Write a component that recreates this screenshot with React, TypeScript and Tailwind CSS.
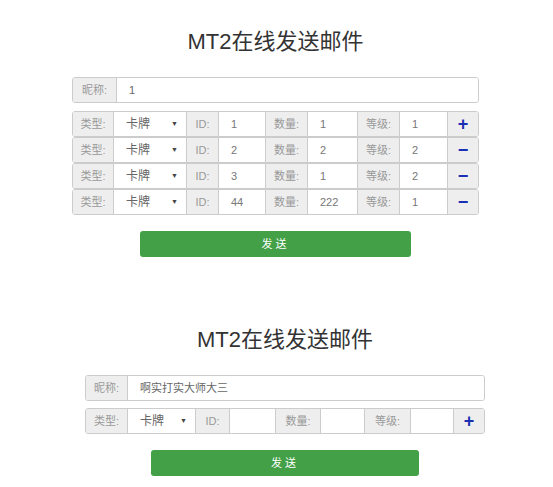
type Item = { id: string; num: string; level: string; add: boolean };

type Widths = number[];

const topRows: Item[] = [
  { id: '1', num: '1', level: '1', add: true },
  { id: '2', num: '2', level: '2', add: false },
  { id: '3', num: '1', level: '2', add: false },
  { id: '44', num: '222', level: '1', add: false },
];

const bottomRows: Item[] = [{ id: '', num: '', level: '', add: true }];

function Label({ text, w, first }: { text: string; w: number; first?: boolean }) {
  return (
    <div
      style={{ width: w }}
      className={`flex h-full shrink-0 items-center justify-center bg-[#eeeeee] text-[#999] ${first ? '' : 'border-l border-[#cccccc]'}`}
    >
      {text}
    </div>
  );
}

function Field({ value, w }: { value: string; w: number }) {
  return (
    <div style={{ width: w }} className="flex h-full shrink-0 items-center border-l border-[#cccccc] bg-white pl-3 text-[#777]">
      {value}
    </div>
  );
}

function Row({ item, w }: { item: Item; w: Widths }) {
  return (
    <div className="flex h-[26px] overflow-hidden rounded-[3px] border border-[#cccccc] text-[11px]">
      <Label text="类型:" w={w[0] - 1} first />
      <div style={{ width: w[1] }} className="flex h-full shrink-0 items-center justify-between border-l border-[#cccccc] bg-white pl-3 pr-2 text-[#666]">
        <span className="text-[12px]">卡牌</span>
        <span className="text-[7px] text-[#444]">▼</span>
      </div>
      <Label text="ID:" w={w[2]} />
      <Field value={item.id} w={w[3]} />
      <Label text="数量:" w={w[4]} />
      <Field value={item.num} w={w[5]} />
      <Label text="等级:" w={w[6]} />
      <Field value={item.level} w={w[7]} />
      <div className="flex h-full flex-1 items-center justify-center border-l border-[#cccccc] bg-[#eeeeee] text-[18px] font-bold text-[#1b2fb3]">
        {item.add ? '+' : '−'}
      </div>
    </div>
  );
}

function Panel({
  width,
  name,
  rows,
  w,
  nameW,
  btnW,
  rowsMt,
}: {
  width: number;
  name: string;
  rows: Item[];
  w: Widths;
  nameW: number;
  btnW: number;
  rowsMt: string;
}) {
  return (
    <div style={{ width }} className="flex flex-col">
      <h1 className="mb-[22px] text-center text-[22px] leading-[26px] text-[#333]">MT2在线发送邮件</h1>
      <div className="flex h-[26px] overflow-hidden rounded-[3px] border border-[#cccccc] text-[11px]">
        <Label text="昵称:" w={nameW} first />
        <div className="flex h-full flex-1 items-center border-l border-[#cccccc] bg-white pl-3 text-[#666]">{name}</div>
      </div>
      <div className={`flex flex-col ${rowsMt}`}>
        {rows.map((item, i) => (
          <Row key={i} item={item} w={w} />
        ))}
      </div>
      <div className="mt-4 flex justify-center">
        <button
          style={{ width: btnW }}
          className="h-[26px] rounded-[3px] bg-[#43a047] text-[11px] tracking-[3px] text-white"
        >
          发送
        </button>
      </div>
    </div>
  );
}

export default function App() {
  return (
    <div
      className="min-h-[487px] w-[553px] bg-white"
      style={{ fontFamily: '"Liberation Sans", "Noto Sans CJK SC", sans-serif' }}
    >
      <div className="flex flex-col pt-[29px] pl-[72px]">
        <Panel
          width={407}
          name="1"
          rows={topRows}
          w={[41, 73, 32, 47, 42, 50, 42, 48, 32]}
          nameW={43}
          btnW={271}
          rowsMt="mt-[8px]"
        />
      </div>
      <div className="flex flex-col pt-[70px] pl-[85px]">
        <Panel
          width={400}
          name="啊实打实大师大三"
          rows={bottomRows}
          w={[42, 68, 34, 46, 45, 44, 46, 43, 32]}
          nameW={41}
          btnW={268}
          rowsMt="mt-[7px]"
        />
      </div>
    </div>
  );
}
